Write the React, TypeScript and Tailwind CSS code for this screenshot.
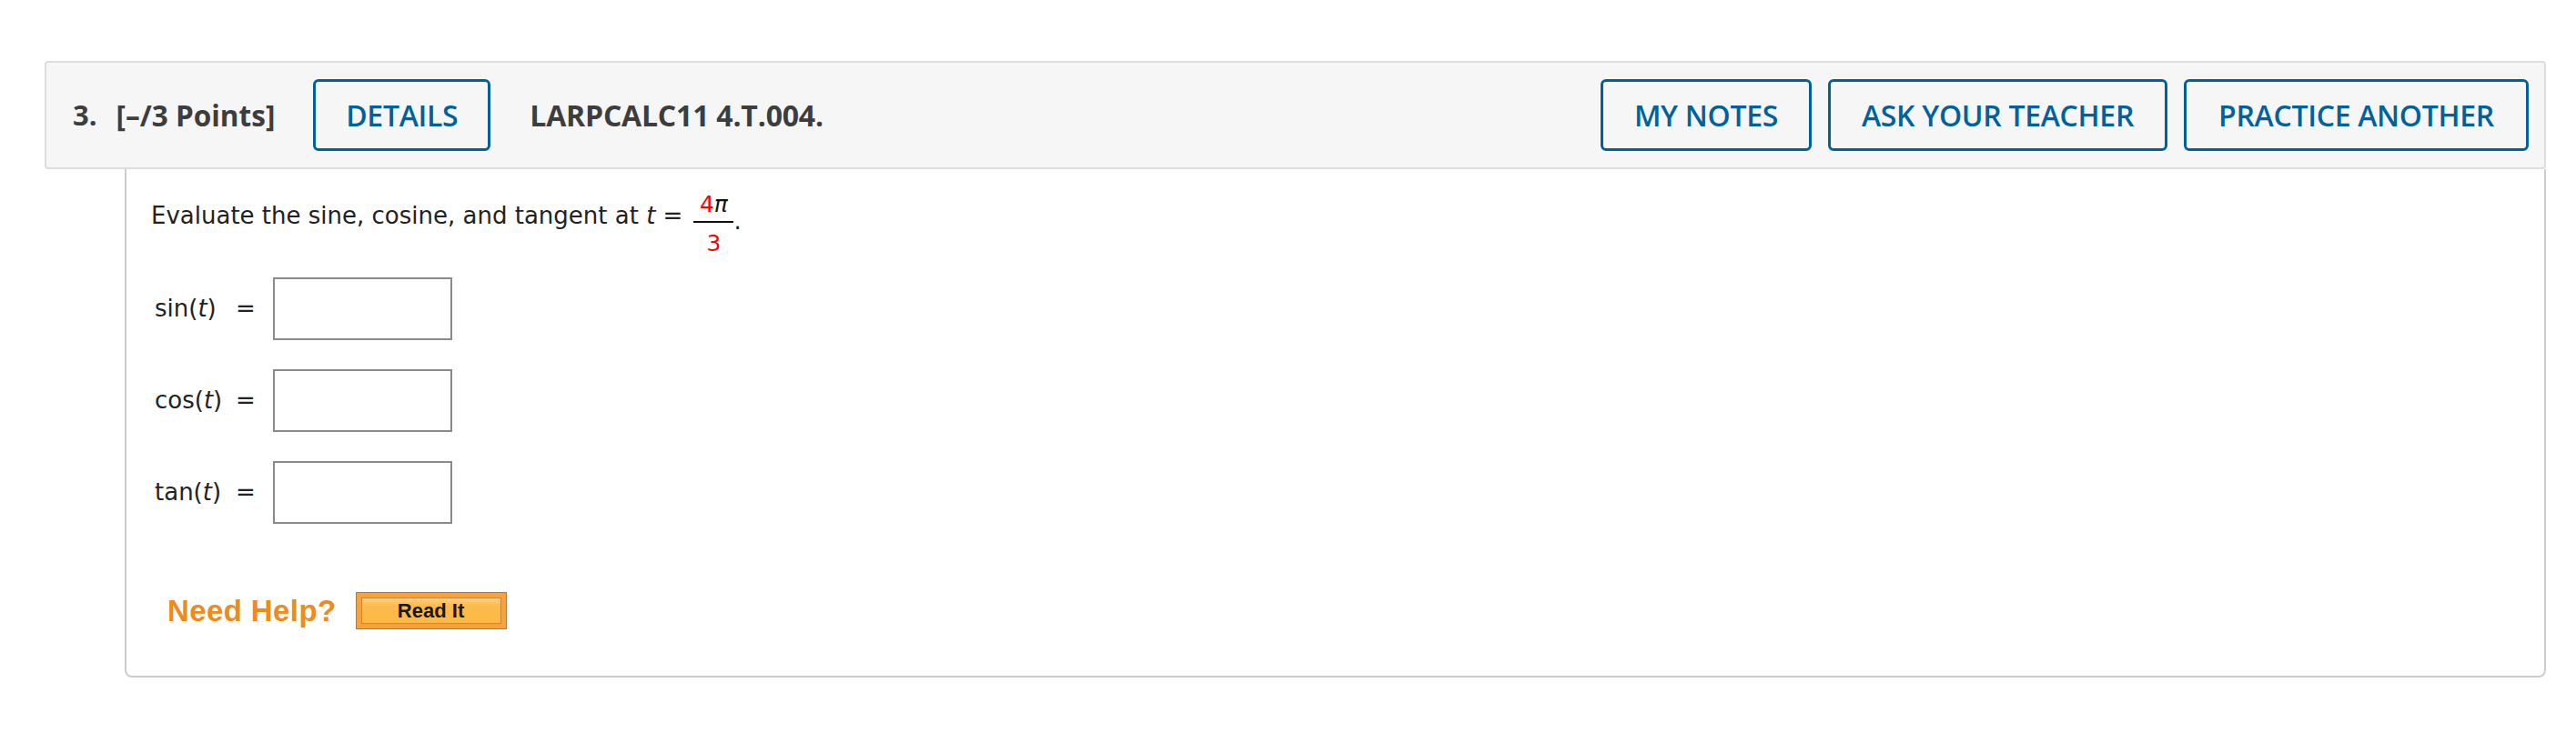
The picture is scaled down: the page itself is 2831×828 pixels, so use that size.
import React from "react";

const btn =
  "flex items-center justify-center h-[79px] border-[3px] border-[#00629b] rounded-[6px] text-[#00629b] font-semibold text-[32px] tracking-[-0.3px] bg-[#f6f6f6]";

function Row({ label }: { label: React.ReactNode }) {
  return (
    <div className="flex items-center h-[69px] ml-[4px]">
      <span className="w-[89px]">{label}</span>
      <span className="w-[41px]">=</span>
      <div className="w-[197px] h-[69px] border-2 border-[#8a8a8a] bg-white" />
    </div>
  );
}

export default function App() {
  return (
    <div className="w-[2831px] h-[828px] bg-white pt-[67px] pl-[49px] pr-[33px]">
      {/* Header */}
      <div className="h-[119px] border-2 border-[#dddddd] bg-[#f6f6f6] rounded-[4px] flex items-center pl-[29px] pr-[17px] font-['Open_Sans',sans-serif]">
        <span className="text-[31px] font-bold text-[#3d3d3d]">3.</span>
        <span className="ml-[21px] text-[31.5px] font-bold text-[#3d3d3d]">[–/3 Points]</span>
        <div className={btn + " ml-[42px] w-[195px]"}>DETAILS</div>
        <span className="ml-[43px] text-[32px] font-bold text-[#3d3d3d] tracking-[-0.2px]">LARPCALC11 4.T.004.</span>
        <div className="ml-auto flex gap-[18px]">
          <div className={btn + " w-[232px]"}>MY NOTES</div>
          <div className={btn + " w-[373px]"}>ASK YOUR TEACHER</div>
          <div className={btn + " w-[379px]"}>PRACTICE ANOTHER</div>
        </div>
      </div>

      {/* Body */}
      <div className="ml-[88px] h-[559px] border-2 border-t-0 border-[#cccccc] rounded-b-[8px] pl-[27px] pt-[11px] font-['DejaVu_Sans',sans-serif] text-[26px] text-[#222222]">
        <div className="flex items-center h-[80px]">
          <span>
            Evaluate the sine, cosine, and tangent at <i>t</i> ={" "}
          </span>
          <span className="inline-flex flex-col items-center mt-[18px] ml-[12px] leading-none">
            <span className="text-[25px] pb-[6px]">
              <span className="text-[#ff0000]">4</span>
              <i className="text-[#111]">π</i>
            </span>
            <span className="w-[44px] h-[2px] bg-[#111]" />
            <span className="text-[25px] text-[#ff0000] pt-[10px]">3</span>
          </span>
          <span className="mt-[12px]">.</span>
        </div>

        <div className="mt-[28px] flex flex-col gap-[32px]">
          <Row label={<>sin(<i>t</i>)</>} />
          <Row label={<>cos(<i>t</i>)</>} />
          <Row label={<>tan(<i>t</i>)</>} />
        </div>

        <div className="mt-[75px] flex items-center h-[41px] ml-[18px]">
          <span className="font-['Liberation_Sans',Arial,sans-serif] font-bold text-[33px] text-[#ef8a1c] tracking-[0.4px]">
            Need Help?
          </span>
          <div className="ml-[21px] w-[166px] h-[41px] border border-[#b3773a] bg-[#f7a23c] p-[5px] flex">
            <div className="flex-1 border border-[#c4873e] bg-[linear-gradient(#fdd08a_0%,#fdbb4b_30%,#fdb945_100%)] flex items-center justify-center font-['Liberation_Sans',Arial,sans-serif] font-bold text-[22px] text-[#1a1a1a] leading-none">
              Read It
            </div>
          </div>
        </div>
      </div>
    </div>
  );
}
